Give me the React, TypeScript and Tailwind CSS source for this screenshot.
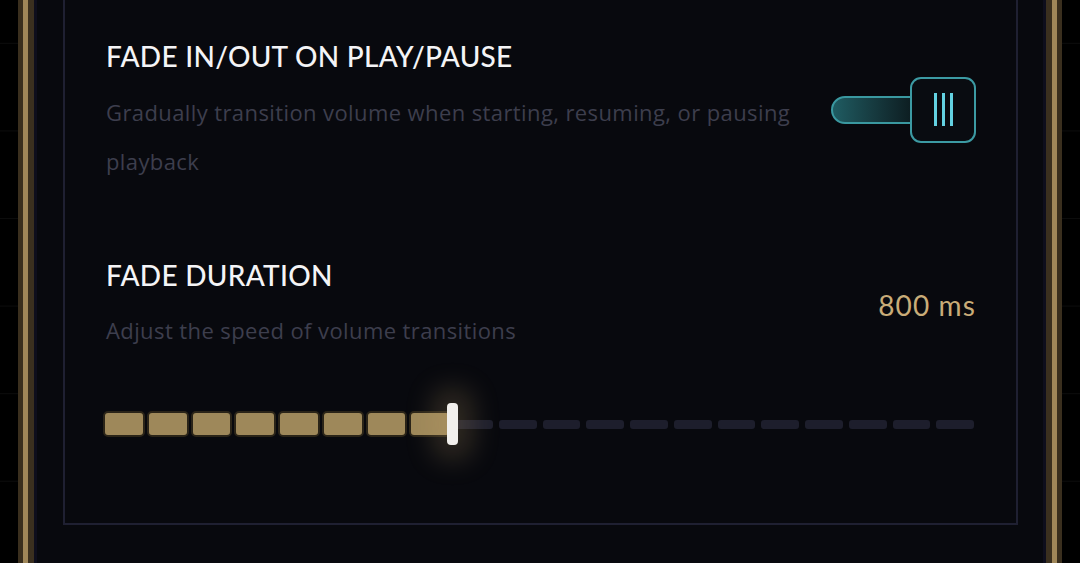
import { useState } from 'react';

const SEGMENTS = 20;
const MAX_MS = 2000;

function Toggle({ on, onChange }: { on: boolean; onChange: (v: boolean) => void }) {
  return (
    <button
      onClick={() => onChange(!on)}
      className="relative w-[145px] h-[66px] shrink-0 -mt-[5px]"
      aria-pressed={on}
    >
      {/* track */}
      <div className="absolute left-0 top-[19px] w-[86px] h-[28px] rounded-l-full border-2 border-[#3a98a0] bg-gradient-to-r from-[#1f5c62] to-[#0c1b1f]" />
      {/* knob */}
      <div className="absolute right-0 top-0 w-[66px] h-[66px] rounded-[11px] border-2 border-[#3c9aa3] bg-[#090c11] flex items-center justify-center gap-[5px]">
        <span className="w-[3px] h-[33px] bg-[#63d2e2]" />
        <span className="w-[3px] h-[33px] bg-[#63d2e2]" />
        <span className="w-[3px] h-[33px] bg-[#63d2e2]" />
      </div>
    </button>
  );
}

function SegmentSlider({ value }: { value: number }) {
  const pct = (value / MAX_MS) * 100;
  const filled = Math.round((value / MAX_MS) * SEGMENTS);

  return (
    <div className="relative h-[42px] flex items-center">
      <div className="grid grid-cols-20 gap-[2px] w-full">
        {Array.from({ length: SEGMENTS }).map((_, i) => (
          <div key={i} className="h-[26px] flex items-center justify-center">
            {i < filled ? (
              <div className="h-[26px] w-full rounded-[5px] border-2 border-[#2a2418] bg-[#9e885a]" />
            ) : (
              <div className="h-[9px] w-[calc(100%-4px)] rounded-[3px] bg-[#1d1e2c]" />
            )}
          </div>
        ))}
      </div>
      <div
        className="absolute top-0 w-[11px] h-[42px] -ml-[5px] rounded-[4px] bg-[#f1efec] shadow-[0_0_28px_14px_rgba(200,170,110,0.22)]"
        style={{ left: `${pct}%` }}
      />
    </div>
  );
}

const desc = 'text-[22px] leading-[49px] tracking-[0.4px] text-[#3d3e4d]';
const descFont = { fontFamily: '"Open Sans", Lato, sans-serif' };

export default function App() {
  const [fade, setFade] = useState(true);
  const [duration] = useState(800);

  return (
    <div
      className="w-full h-[563px] overflow-hidden bg-black bg-[linear-gradient(to_bottom,transparent_43px,#0c0c0c_43px,#0c0c0c_44px,transparent_44px)] bg-[length:100%_87.6px] px-[18px]"
      style={{ fontFamily: 'Lato, "Noto Sans", sans-serif' }}
    >
      <div className="h-full border-x-[5px] border-[#3a2f1e]">
        <div className="h-full border-x-[5px] border-[#a08759]">
          <div className="h-full border-x-[6px] border-[#3b301f]">
            <div className="h-full bg-[#08090e] shadow-[inset_3px_0_0_#0e0e1c,inset_-3px_0_0_#0e0e1c] pl-[29px] pr-[28px]">
              <div className="border-x-2 border-b-2 border-[#1f2032] pl-[41px] pr-[40px] pt-[38px] pb-[78px]">
                {/* fade toggle */}
                <div className="flex items-center justify-between">
                  <div className="max-w-[700px]">
                    <h3 className="text-[28px] leading-[36px] font-medium tracking-[0.01em] text-[#f4f4f6]">
                      FADE IN/OUT ON PLAY/PAUSE
                    </h3>
                    <p className={`mt-[14px] ${desc}`} style={descFont}>
                      Gradually transition volume when starting, resuming, or pausing playback
                    </p>
                  </div>
                  <Toggle on={fade} onChange={setFade} />
                </div>

                {/* fade duration */}
                <div className="mt-[71px] flex items-center justify-between">
                  <div>
                    <h3 className="text-[28px] leading-[36px] font-medium tracking-[0.01em] text-[#f4f4f6]">
                      FADE DURATION
                    </h3>
                    <p className={`mt-[13px] ${desc}`} style={descFont}>
                      Adjust the speed of volume transitions
                    </p>
                  </div>
                  <span className="text-[28px] tracking-[0.04em] text-[#c9ac78] -mt-[2px]">{duration} ms</span>
                </div>

                <div className="mt-[48px] -ml-[3px]">
                  <SegmentSlider value={duration} />
                </div>
              </div>
            </div>
          </div>
        </div>
      </div>
    </div>
  );
}
